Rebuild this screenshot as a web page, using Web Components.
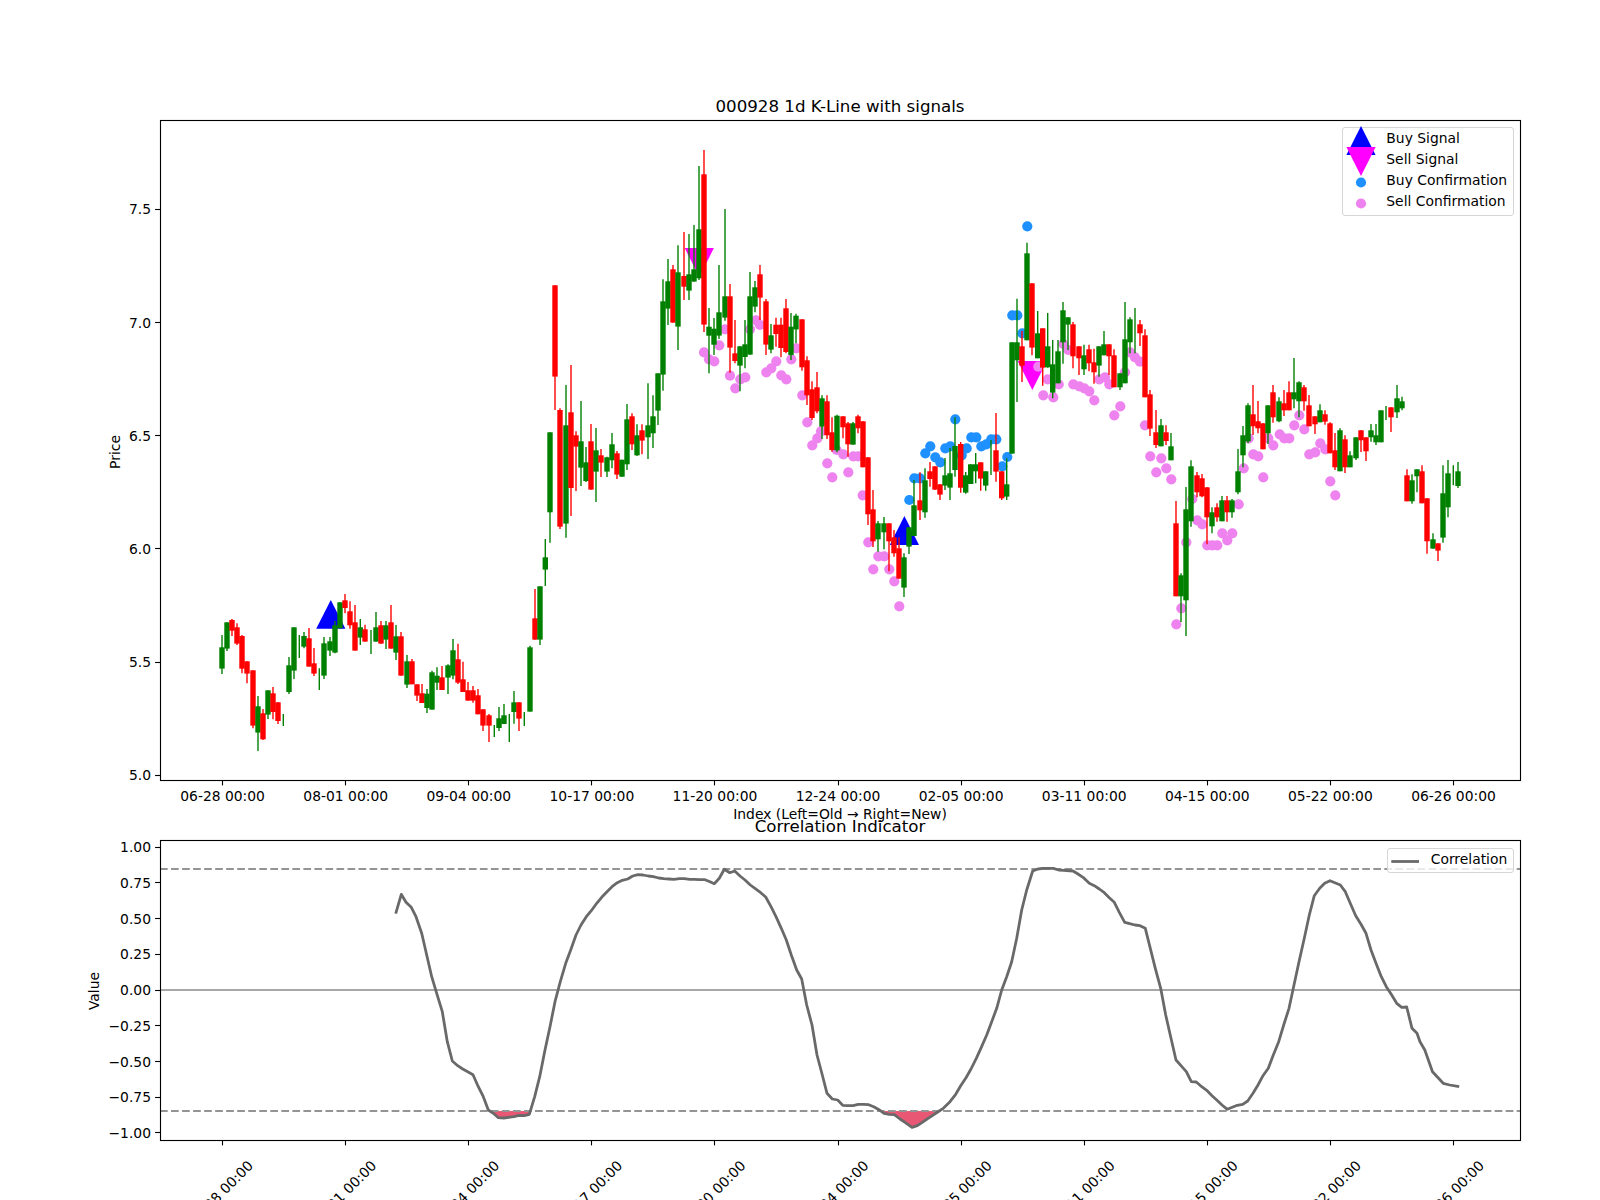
<!DOCTYPE html>
<html lang="en">
<head>
<meta charset="utf-8">
<title>000928 1d K-Line with signals</title>
<style>
  html, body { margin: 0; padding: 0; background: #fff; overflow: hidden; }
</style>
</head>
<body>
<chart-figure>
  <candle-chart heading="000928 1d K-Line with signals" ylabel="Price" xlabel="Index (Left=Old → Right=New)">
    <chart-legend slot="legend" style="--top:127.3px;--width:171.5px;--height:88.4px">
      <legend-entry marker="up">Buy Signal</legend-entry>
      <legend-entry marker="down">Sell Signal</legend-entry>
      <legend-entry marker="buy">Buy Confirmation</legend-entry>
      <legend-entry marker="sell">Sell Confirmation</legend-entry>
    </chart-legend>
  </candle-chart>
  <corr-chart heading="Correlation Indicator" ylabel="Value">
    <chart-legend slot="legend" style="--top:28px;--width:127.1px;--height:24.5px">
      <legend-entry marker="line">Correlation</legend-entry>
    </chart-legend>
  </corr-chart>
</chart-figure>

<script>
const FONT = `"DejaVu Sans", "Liberation Sans", sans-serif`;
const L = 160, R = 1520;
const TICK_X = [0,1,2,3,4,5,6,7,8,9,10].map(i => 222.6 + 123.09 * i);
const DATES = ['06-28','08-01','09-04','10-17','11-20','12-24','02-05','03-11','04-15','05-22','06-26'].map(d => d + ' 00:00');
const snap = v => Math.floor(v) + 0.5;

function frame(top, bottom) {
  let s = `<rect x="${L+.5}" y="${top+.5}" width="${R-L}" height="${bottom-top}" fill="none" stroke="#000" stroke-width="1.11"/>`;
  for (const x of TICK_X) s += `<line x1="${snap(x)}" x2="${snap(x)}" y1="${bottom+.5}" y2="${bottom+5.4}" stroke="#000" stroke-width="1.11"/>`;
  return s;
}
function yTick(y, label, dy = 5.1) {
  return `<line x1="${L-4.9}" x2="${L}" y1="${snap(y)}" y2="${snap(y)}" stroke="#000" stroke-width="1.11"/>` +
         `<text x="151" y="${y+dy}" text-anchor="end">${label}</text>`;
}
const BASE_STYLE = `
  :host { display: block; position: relative; width: 1600px; }
  svg { display: block; overflow: visible; font-family: ${FONT}; font-size: 13.89px; fill: #000; }
  .title { font-size: 16.67px; text-anchor: middle; }
`;

/* ---------- candle data: read as [x, colour, bodyTop, bodyBottom, wickTop, wickBottom] in crops ---------- */
const SEGMENTS = [
 [150,480,[[216,'g',502,566,465,582],[231,'g',427,506,427,513],[246,'r',420,452,417,468],[261,'r',442,491,430,495],[276,'r',468,566,465,580],[291,'r',544,581,544,610],[309,'r',571,737,571,745],[324,'g',679,758,648,813],[339,'r',700,778,687,780],[354,'g',631,704,631,717],[369,'r',640,696,621,718],[384,'r',667,723,667,732],[400,'g',0,0,702,738],[417,'g',556,636,531,642],[432,'g',442,572,442,597],[448,'g',0,0,465,534],[462,'g',468,500,456,505],[477,'r',475,560,444,560],[492,'r',550,581,504,588],[508,'g',0,0,565,630],[522,'g',490,587,471,597],[540,'g',484,512,471,528],[555,'g',436,518,423,520],[570,'g',367,445,367,445],[585,'r',361,384,342,400],[600,'r',394,436,364,446],[615,'r',427,512,375,512],[631,'g',442,473,417,495],[645,'r',448,485,434,485],[663,'g',0,0,450,522],[678,'g',442,485,396,485],[693,'r',436,491,423,491],[708,'g',436,479,423,507],[723,'r',427,506,375,506],[738,'g',469,518,435,540],[753,'r',469,587,456,587],[771,'g',544,614,525,624],[786,'r',544,613,537,613],[801,'r',613,647,613,663],[816,'r',640,669,612,669],[831,'g',641,684,627,699],[846,'g',577,689,572,689],[861,'g',587,608,562,630],[876,'r',592,630,558,630],[894,'g',556,593,553,642],[909,'g',511,587,477,598],[924,'r',538,608,491,612],[939,'r',598,636,545,636],[954,'r',631,662,606,662],[969,'r',631,662,618,668],[984,'r',646,703,627,703],[999,'r',688,737,688,753],[1017,'r',706,737,702,786],[1033,'g',0,0,735,771],[1047,'g',715,744,681,753],[1062,'g',706,732,672,732],[1078,'g',0,0,702,786],[1092,'g',667,696,633,731],[1107,'r',667,716,667,753],[1123,'g',0,0,696,738],[1140,'g',502,695,497,695]]],
 [530,400,[[15,'r',655,719,567,719],[30,'g',559,719,559,735],[46,'g',472,509,417,558],[60,'g',97,337,97,428],[75,'r',-344,-70,-344,30],[90,'r',30,380,25,387],[108,'g',76,371,-45,413],[123,'r',37,264,-105,348],[138,'r',106,140,94,273],[153,'g',124,203,3,258],[168,'g',187,243,141,246],[183,'r',124,269,72,269],[198,'g',151,215,84,306],[213,'r',166,188,147,231],[231,'g',172,215,170,231],[246,'g',133,181,99,205],[261,'r',160,224,153,237],[276,'g',179,230,179,230],[291,'g',58,193,12,210],[306,'r',49,133,40,150],[321,'g',106,166,73,168],[336,'r',91,122,73,163],[354,'g',76,112,-50,177],[369,'g',49,100,-14,144]]],
 [530,130,[[384,'g',730,842,730,885],[399,'g',514,734,448,782],[414,'g',454,536,387,585],[429,'r',418,578,405,578],[444,'g',427,590,346,660],[462,'r',438,470,306,510],[477,'g',433,482,312,510],[492,'g',418,455,285,455],[507,'g',298,445,108,450],[522,'r',133,584,60,606],[537,'g',590,617,534,730],[552,'g',596,644,564,675],[567,'g',547,617,405,627],[585,'g',499,563,237,572],[600,'r',499,653,462,728],[615,'r',670,693,570,700],[630,'g',649,707,649,784],[645,'g',643,681,570,715],[660,'g',499,674,426,674],[675,'g',472,530,453,547],[690,'r',433,503,405,570],[708,'r',514,644,507,675],[723,'g',616,659,582,670],[738,'r',584,612,563,650],[753,'r',584,654,563,682],[768,'r',535,666,507,670],[783,'g',590,675,549,690],[798,'g',557,598,551,640],[816,'r',568,712,568,722],[831,'r',691,796,679,825],[846,'r',778,864,754,870],[861,'r',772,844,726,850]]],
 [530,400,[[876,'g',-5,80,-14,117],[891,'r',4,106,-14,117],[906,'r',97,150,52,155],[921,'g',47,151,44,157],[939,'r',49,82,49,115],[954,'r',70,133,66,170],[969,'g',70,134,66,134],[984,'r',49,85,44,100],[999,'r',64,202,64,202],[1014,'r',172,343,172,375],[1029,'r',328,424,270,441],[1044,'g',370,418,363,455],[1062,'g',370,397,351,448],[1077,'r',370,424,370,514],[1092,'r',412,460,390,470],[1107,'r',445,536,412,536],[1122,'g',472,563,460,591],[1137,'g',382,440,382,462],[1152,'g',316,408,240,408],[1170,'r',301,331,217,360],[1185,'g',241,337,205,353]]],
 [860,200,[[210,'r',814,837,786,860],[225,'r',799,869,799,870],[240,'r',853,884,853,900],[255,'g',826,857,774,870],[270,'g',820,863,744,900],[285,'g',738,810,652,830],[302,'r',732,863,726,878],[317,'g',826,878,816,881],[332,'g',793,852,793,852],[347,'g',793,814,759,850],[362,'r',787,836,787,872],[377,'g',814,857,814,872],[393,'g',0,0,720,825],[408,'r',751,815,639,845],[425,'r',814,895,814,900],[440,'g',853,890,775,900],[456,'g',427,761,427,761],[471,'g',427,481,296,606],[486,'r',439,497,393,546],[501,'g',160,421,128,421],[516,'r',250,443,250,466],[533,'g',400,475,333,475],[548,'r',385,503,385,557],[563,'g',439,502,339,503],[578,'g',493,578,420,595],[594,'g',454,550,420,550],[609,'g',331,427,306,491],[624,'g',352,374,352,450],[639,'r',373,469,366,505],[657,'r',439,475,439,525],[672,'g',466,508,434,525],[687,'r',448,490,434,514],[702,'r',487,517,446,551],[717,'g',439,497,439,530],[732,'g',433,466,393,466],[747,'r',433,469,433,525],[762,'r',466,562,448,562],[780,'g',520,562,520,570],[795,'g',418,550,306,550],[810,'g',358,427,352,460],[825,'g',0,0,324,460],[840,'r',373,400,360,438],[855,'r',406,592,388,592],[870,'r',583,686,570,708],[888,'r',697,735,630,744],[903,'g',676,739,657,739],[918,'r',697,723,676,735],[933,'g',739,781,699,781]]],
 [1100,340,[[228,'r',550,769,483,769],[243,'g',706,769,700,846],[258,'g',508,781,441,888],[273,'g',379,544,361,560],[291,'r',406,457,396,472],[306,'r',415,469,402,472],[321,'r',442,532,442,613],[336,'g',517,559,502,580],[351,'r',502,532,490,545],[366,'g',481,544,468,544],[381,'r',481,517,468,545],[396,'g',481,517,477,533],[414,'g',394,457,327,463],[429,'g',286,346,258,382],[444,'g',196,304,190,310],[459,'r',223,259,135,285],[474,'r',244,265,183,280],[489,'r',250,328,250,328],[504,'g',196,280,196,312],[519,'r',157,232,135,248],[537,'g',184,244,172,247],[552,'r',190,211,150,228],[567,'r',157,211,124,211],[582,'g',157,178,54,205],[597,'g',127,184,124,232],[612,'r',142,184,135,212],[627,'r',196,259,165,259],[645,'r',229,253,229,282],[660,'g',211,247,193,247],[675,'r',223,245,211,254],[690,'r',250,340,247,340],[705,'r',331,382,279,390],[720,'g',271,394,265,394],[735,'r',298,382,286,399],[750,'g',346,382,334,382],[768,'g',292,355,292,360],[783,'r',271,301,271,336],[798,'r',292,334,292,363],[813,'g',271,292,252,305],[828,'g',286,307,252,315],[843,'g',211,307,211,307],[858,'g',0,0,198,240],[873,'r',202,232,202,276],[891,'g',175,217,135,234],[906,'g',184,205,170,211],[921,'r',406,484,388,484],[936,'g',421,484,403,491],[951,'g',388,409,388,457],[966,'r',394,490,376,490],[981,'r',475,604,475,641],[999,'g',598,626,580,626],[1014,'r',610,632,610,663],[1029,'g',460,593,376,608],[1044,'g',400,502,360,532],[1060,'g',0,0,376,436],[1074,'g',394,438,366,444]]]
];
const crop = (x0,y0,pts) => pts.map(([x,y]) => [x0+x/3, y0+y/3]);
const VIOLET = [
  ...crop(530,130,[[522,667],[537,688],[553,694],[568,646],[585,598],[600,737],[616,775],[631,748],[646,742],[660,598],[678,571],[690,585],[709,727],[724,715],[739,694],[754,736],[769,748],[784,688],[799,655],[817,796]]),
  ...crop(530,400,[[832,67],[847,136],[862,115],[873,94],[892,190],[907,232],[920,150],[940,163],[955,217],[970,169],[985,169],[998,286],[1015,427],[1045,469],[1063,469],[1030,508],[1078,508],[1093,544],[1108,619]]),
  ...crop(860,200,[[535,500],[563,538],[596,553],[550,586],[580,592],[610,432],[625,450],[640,553],[658,559],[673,565],[688,574],[703,601],[718,538]]),
  ...crop(1100,340,[[15,112],[28,133],[43,226],[61,199],[75,97],[90,37],[105,52],[120,65],[135,256],[151,349],[184,355],[169,397],[199,385],[214,418],[229,853],[244,805],[259,607],[277,477],[292,541],[307,553],[322,616],[337,616],[352,616],[367,580],[382,601],[397,580],[416,493],[431,385],[446,295],[460,343],[475,349],[490,412],[505,295],[520,316],[539,283],[553,295],[568,295],[583,256],[598,226],[613,268],[628,343],[646,337],[661,310],[676,328],[691,424],[706,466]])
];
const BLUE = crop(860,200,[[148,900],[163,835],[180,835],[196,760],[211,739],[226,772],[241,787],[256,745],[271,739],[286,658],[305,766],[320,745],[334,712],[349,712],[364,739],[379,733],[394,718],[409,718],[427,799],[442,771],[457,346],[472,346],[487,400],[502,79]]);

class CandleChart extends HTMLElement {
  constructor() {
    super();
    const root = this.attachShadow({ mode: 'open' });
    const heading = this.getAttribute('heading'), ylabel = this.getAttribute('ylabel'), xlabel = this.getAttribute('xlabel');
    let marks = '';
    const tri = (cx, a, b, c) => `<polygon points="${cx-14.6},${b} ${cx+14.6},${b} ${cx},${a}" fill="${c}"/>`;
    marks += tri(330.8, 600, 628.7, '#0000ff') + tri(904.4, 516, 545, '#0000ff');
    marks += tri(699.3, 277, 248, '#ff00ff') + tri(1032.3, 390, 361, '#ff00ff');
    for (const [x, y] of VIOLET) marks += `<circle cx="${x.toFixed(1)}" cy="${y.toFixed(1)}" r="5.1" fill="#ee82ee"/>`;
    for (const [x, y] of BLUE) marks += `<circle cx="${x.toFixed(1)}" cy="${y.toFixed(1)}" r="5.1" fill="#1e90ff"/>`;
    let candles = '';
    for (const [x0, y0, rows] of SEGMENTS) for (const [zx, c, bt, bb, wt, wb] of rows) {
      const x = x0 + zx / 3, col = c === 'r' ? '#ff0000' : '#008000';
      candles += `<line x1="${x.toFixed(1)}" x2="${x.toFixed(1)}" y1="${(y0+wt/3).toFixed(1)}" y2="${(y0+wb/3).toFixed(1)}" stroke="${col}" stroke-width="1.39"/>`;
      if (bb > bt) candles += `<rect x="${(x-2.7).toFixed(1)}" y="${(y0+bt/3).toFixed(1)}" width="5.4" height="${((bb-bt)/3).toFixed(1)}" fill="${col}"/>`;
    }
    let axes = frame(120, 780);
    ['5.0','5.5','6.0','6.5','7.0','7.5'].forEach((t,i) => axes += yTick(775.2 - 113.2*i, t));
    TICK_X.forEach((x,i) => axes += `<text x="${x}" y="801" text-anchor="middle">${DATES[i]}</text>`);
    root.innerHTML = `<style>${BASE_STYLE} :host { height: 820px; }</style>
      <svg width="1600" height="820" viewBox="0 0 1600 820" xmlns="http://www.w3.org/2000/svg">
        <defs><clipPath id="c1"><rect x="${L}" y="120" width="${R-L}" height="660"/></clipPath></defs>
        <g clip-path="url(#c1)">${marks}${candles}</g>
        ${axes}
        <text class="title" x="840" y="112">${heading}</text>
        <text x="840" y="819" text-anchor="middle">${xlabel}</text>
        <text transform="translate(120,452) rotate(-90)" text-anchor="middle">${ylabel}</text>
      </svg>
      <slot name="legend"></slot>`;
  }
}

/* ---------- correlation curve, read from the crops ---------- */
const CURVE = [
 ...crop(390,845,[[17,206],[34,148],[48,172],[64,187],[78,215],[95,265],[110,330],[125,395],[140,445],[157,500],[172,590],[187,648],[203,662],[218,672],[233,680],[249,689],[265,725],[280,755],[295,795],[310,805],[325,818],[341,819],[356,817],[372,815],[387,811],[403,812],[418,808],[434,755],[449,695],[465,615],[480,545],[495,470],[511,410],[527,355],[542,315],[558,270],[573,240],[589,215],[604,197],[620,175],[635,157],[651,140],[666,125],[682,113],[697,106],[713,102],[728,93],[744,89],[759,90],[775,93],[790,95],[806,99],[821,101],[837,102],[852,103],[868,101],[883,101],[899,103],[914,103],[929,104],[945,104],[960,110],[973,116],[988,100],[1003,73],[1019,83],[1034,78],[1050,93],[1065,105],[1081,120],[1096,131],[1112,143],[1127,156],[1143,185],[1158,215],[1174,250],[1189,285],[1204,330],[1220,375],[1235,402],[1250,480],[1266,540],[1281,630],[1297,690],[1311,745],[1327,762],[1343,765],[1358,781],[1374,782],[1389,782],[1405,778],[1420,778],[1436,779],[1451,785],[1467,794],[1482,805],[1498,808],[1513,809]]),
 ...crop(900,845,[[0,822],[15,832],[36,847],[52,842],[67,832],[83,821],[98,811],[113,801],[130,790],[150,770],[167,748],[182,722],[198,698],[213,672],[229,640],[244,607],[260,570],[275,530],[290,490],[305,435],[320,395],[335,350],[350,280],[365,195],[380,135],[398,78],[414,72],[429,70],[445,70],[460,70],[476,75],[491,76],[519,78],[534,87],[549,97],[568,115],[583,122],[598,132],[613,143],[628,158],[643,172],[658,202],[674,232],[689,236],[705,240],[720,242],[736,250],[751,310],[766,370],[782,430],[797,510],[813,580],[828,645],[843,662],[859,680],[874,710],[889,711],[905,725],[920,736],[936,752],[951,766],[966,780],[982,793],[997,787],[1012,781],[1028,778],[1043,768],[1059,745],[1074,720],[1089,692],[1105,670],[1120,630],[1136,590],[1151,540],[1167,490],[1182,420],[1197,350],[1213,280],[1228,210],[1243,152],[1259,130],[1274,115],[1290,107],[1321,120],[1336,140],[1352,178],[1367,212],[1383,238],[1398,265],[1413,315],[1428,355],[1444,395],[1459,425],[1475,450],[1490,475],[1505,487],[1520,486],[1536,550],[1551,565],[1560,590]]),
 [1424.8,1050],[1432.5,1071.7],[1443.2,1083.3],[1449.7,1085],[1459.2,1086.7]
];
function dips(pts, level) {
  const out = []; let run = null;
  for (let i = 1; i < pts.length; i++) {
    const [x0,y0] = pts[i-1], [x1,y1] = pts[i];
    if (y0 <= level && y1 > level) { const t = (level-y0)/(y1-y0); run = [[x0+t*(x1-x0), level],[x1,y1]]; }
    else if (y0 > level && y1 > level && run) run.push([x1,y1]);
    else if (y0 > level && y1 <= level && run) { const t = (level-y0)/(y1-y0); run.push([x0+t*(x1-x0), level]); out.push(run); run = null; }
  }
  return out;
}
class CorrChart extends HTMLElement {
  constructor() {
    super();
    const root = this.attachShadow({ mode: 'open' });
    const heading = this.getAttribute('heading'), ylabel = this.getAttribute('ylabel');
    const pts = CURVE.map(p => p.map(v => v.toFixed(1)).join(',')).join(' ');
    const fills = dips(CURVE, 1111).map(r => `<polygon points="${r.map(p => p.map(v => v.toFixed(1)).join(',')).join(' ')}" fill="#e85875"/>`).join('');
    let axes = frame(840, 1140);
    ['1.00','0.75','0.50','0.25','0.00','−0.25','−0.50','−0.75','−1.00'].forEach((t,i) => axes += yTick(847.2 + 35.7*i, t));
    TICK_X.forEach((x,i) => axes += `<text transform="translate(${x-2},1193) rotate(-45)" text-anchor="middle" dominant-baseline="central">${DATES[i]}</text>`);
    root.innerHTML = `<style>${BASE_STYLE} :host { height: 380px; }</style>
      <svg width="1600" height="380" viewBox="0 820 1600 380" xmlns="http://www.w3.org/2000/svg">
        <line x1="${L}" x2="${R}" y1="990" y2="990" stroke="#a8a8a8" stroke-width="2.08"/>
        ${fills}
        <line x1="${L}" x2="${R}" y1="869" y2="869" stroke="#949494" stroke-width="2.08" stroke-dasharray="7.7 3.33"/>
        <line x1="${L}" x2="${R}" y1="1111" y2="1111" stroke="#949494" stroke-width="2.08" stroke-dasharray="7.7 3.33"/>
        <polyline points="${pts}" fill="none" stroke="#696969" stroke-width="2.78" stroke-linejoin="round"/>
        ${axes}
        <text class="title" x="840" y="832">${heading}</text>
        <text transform="translate(99,991) rotate(-90)" text-anchor="middle">${ylabel}</text>
      </svg>
      <slot name="legend"></slot>`;
  }
}

class ChartLegend extends HTMLElement {
  constructor() {
    super();
    this.attachShadow({ mode: 'open' }).innerHTML = `<style>
      :host { position: absolute; top: var(--top); right: 86.2px; width: var(--width); height: var(--height);
              box-sizing: border-box; display: flex; flex-direction: column; padding-top: 1.5px;
              background: rgba(255,255,255,.8); border: 1px solid #d6d6d6; border-radius: 3px; }
    </style><slot></slot>`;
  }
}

class LegendEntry extends HTMLElement {
  constructor() {
    super();
    const kind = this.getAttribute('marker');
    const icons = {
      up:   `<polygon points="3.4,14.6 32.6,14.6 18,-14.6" fill="#0000ff"/>`,
      down: `<polygon points="3.4,-14.6 32.6,-14.6 18,14.6" fill="#ff00ff"/>`,
      buy:  `<circle cx="18" cy="0" r="5.1" fill="#1e90ff"/>`,
      sell: `<circle cx="18" cy="0" r="5.1" fill="#ee82ee"/>`,
      line: `<line x1="3.3" x2="31" y1="0" y2="0" stroke="#696969" stroke-width="2.78"/>`
    };
    this.attachShadow({ mode: 'open' }).innerHTML = `<style>
      :host { display: flex; align-items: center; height: 21px; font: 13.89px/21px ${FONT}; color: #000; white-space: nowrap; }
      svg { flex: none; width: 43px; height: 21px; overflow: visible; }
      .label { padding-bottom: 3.6px; }
    </style>
    <svg viewBox="0 -10.5 43 21" xmlns="http://www.w3.org/2000/svg">${icons[kind] || ''}</svg>
    <span class="label"><slot></slot></span>`;
  }
}

class ChartFigure extends HTMLElement {
  constructor() {
    super();
    this.attachShadow({ mode: 'open' }).innerHTML = `<style>
      :host { display: grid; grid-template-rows: 820px 380px; width: 1600px; height: 1200px; overflow: hidden; background: #fff; }
    </style><slot></slot>`;
  }
}

customElements.define('legend-entry', LegendEntry);
customElements.define('chart-legend', ChartLegend);
customElements.define('candle-chart', CandleChart);
customElements.define('corr-chart', CorrChart);
customElements.define('chart-figure', ChartFigure);
</script>
</body>
</html>
